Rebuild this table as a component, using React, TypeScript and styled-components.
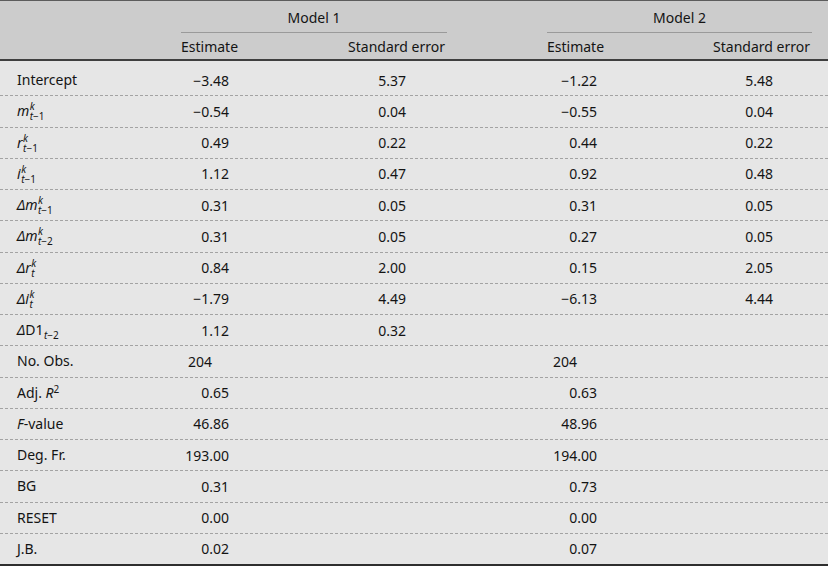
import React from "react";
import styled, { createGlobalStyle } from "styled-components";

const Global = createGlobalStyle`
  html, body { margin: 0; padding: 0; background: #e6e6e6; }
  body { font-family: "Noto Sans", "Open Sans", sans-serif; color: #141414; }
`;

const COLS = "181px 133px 133px 100px 133px 132px 1fr";

const Table = styled.div`
  width: 828px;
  height: 566px;
  display: flex;
  flex-direction: column;
  box-sizing: border-box;
  border-top: 1px solid #5c5c5c;
  border-bottom: 2px solid #2e2e2e;
  background: #e6e6e6;
  font-size: 14px;
`;

const Head = styled.div`
  background: #cccccc;
  border-bottom: 2px solid #3f3f3f;
  display: grid;
  grid-template-columns: ${COLS};
  grid-template-rows: 32px 26px;
`;

const ModelTitle = styled.div<{ $col: number }>`
  grid-column: ${(p) => p.$col} / span 2;
  grid-row: 1;
  border-bottom: 1px solid #9a9a9a;
  display: flex;
  align-items: center;
  justify-content: center;
  padding-top: 2px;
  box-sizing: border-box;
`;

const SubTitle = styled.div<{ $col: number; $right?: boolean }>`
  grid-column: ${(p) => p.$col};
  grid-row: 2;
  display: flex;
  align-items: center;
  justify-content: ${(p) => (p.$right ? "flex-end" : "flex-start")};
  padding-right: ${(p) => (p.$right ? "2px" : "0")};
`;

const Body = styled.div`
  flex: 1;
  display: flex;
  flex-direction: column;
  padding-top: 4px;
`;

const Row = styled.div<{ $last?: boolean }>`
  flex: 1;
  display: grid;
  grid-template-columns: ${COLS};
  align-items: center;
  border-bottom: ${(p) => (p.$last ? "none" : "1px dashed #a3a3a3")};
`;

const Label = styled.div`
  grid-column: 1;
  padding-left: 17px;
  white-space: nowrap;
  line-height: 20px;
`;

const Num = styled.div<{ $col: number; $pad: number; $left?: boolean }>`
  grid-column: ${(p) => p.$col};
  text-align: ${(p) => (p.$left ? "left" : "right")};
  padding-right: ${(p) => (p.$left ? 0 : p.$pad)}px;
  padding-left: ${(p) => (p.$left ? p.$pad : 0)}px;
  white-space: nowrap;
`;

const Scripts = styled.span`
  display: inline-flex;
  flex-direction: column;
  font-size: 10px;
  line-height: 10px;
  vertical-align: 6px;
  margin-left: 0.5px;
`;

const SupOnly = styled.sup`
  font-size: 10px;
  vertical-align: 5px;
  line-height: 0;
`;

const SubOnly = styled.sub`
  font-size: 10px;
  vertical-align: -4px;
  line-height: 0;
  margin-left: 0.5px;
`;

const It = styled.i`
  font-style: italic;
`;

const Var = ({ v, sup, sub }: { v: string; sup: React.ReactNode; sub: React.ReactNode }) => (
  <>
    <It>{v}</It>
    <Scripts>
      <It>{sup}</It>
      <span>{sub}</span>
    </Scripts>
  </>
);

const tm1 = (
  <>
    <It>t</It>−1
  </>
);
const tm2 = (
  <>
    <It>t</It>−2
  </>
);
const t = <It>t</It>;

type Cell = string | { v: string; left: true } | null;

const rows: { label: React.ReactNode; cells: Cell[] }[] = [
  { label: "Intercept", cells: ["−3.48", "5.37", "−1.22", "5.48"] },
  { label: <Var v="m" sup="k" sub={tm1} />, cells: ["−0.54", "0.04", "−0.55", "0.04"] },
  { label: <Var v="r" sup="k" sub={tm1} />, cells: ["0.49", "0.22", "0.44", "0.22"] },
  { label: <Var v="i" sup="k" sub={tm1} />, cells: ["1.12", "0.47", "0.92", "0.48"] },
  {
    label: (
      <>
        <It>Δ</It>
        <Var v="m" sup="k" sub={tm1} />
      </>
    ),
    cells: ["0.31", "0.05", "0.31", "0.05"],
  },
  {
    label: (
      <>
        <It>Δ</It>
        <Var v="m" sup="k" sub={tm2} />
      </>
    ),
    cells: ["0.31", "0.05", "0.27", "0.05"],
  },
  {
    label: (
      <>
        <It>Δ</It>
        <Var v="r" sup="k" sub={t} />
      </>
    ),
    cells: ["0.84", "2.00", "0.15", "2.05"],
  },
  {
    label: (
      <>
        <It>Δ</It>
        <Var v="i" sup="k" sub={t} />
      </>
    ),
    cells: ["−1.79", "4.49", "−6.13", "4.44"],
  },
  {
    label: (
      <>
        <It>Δ</It>D1<SubOnly>{tm2}</SubOnly>
      </>
    ),
    cells: ["1.12", "0.32", null, null],
  },
  { label: "No. Obs.", cells: [{ v: "204", left: true }, null, { v: "204", left: true }, null] },
  {
    label: (
      <>
        Adj. <It>R</It>
        <SupOnly>2</SupOnly>
      </>
    ),
    cells: ["0.65", null, "0.63", null],
  },
  {
    label: (
      <>
        <It>F</It>-value
      </>
    ),
    cells: ["46.86", null, "48.96", null],
  },
  { label: "Deg. Fr.", cells: ["193.00", null, "194.00", null] },
  { label: "BG", cells: ["0.31", null, "0.73", null] },
  { label: "RESET", cells: ["0.00", null, "0.00", null] },
  { label: "J.B.", cells: ["0.02", null, "0.07", null] },
];

const colSpec = [
  { col: 2, pad: 85, leftPad: 7 },
  { col: 3, pad: 41, leftPad: 7 },
  { col: 5, pad: 83, leftPad: 6 },
  { col: 6, pad: 39, leftPad: 6 },
];

export default function App() {
  return (
    <>
      <Global />
      <Table>
        <Head>
          <ModelTitle $col={2}>Model 1</ModelTitle>
          <ModelTitle $col={5}>Model 2</ModelTitle>
          <SubTitle $col={2}>Estimate</SubTitle>
          <SubTitle $col={3} $right>
            Standard error
          </SubTitle>
          <SubTitle $col={5}>Estimate</SubTitle>
          <SubTitle $col={6} $right>
            Standard error
          </SubTitle>
        </Head>
        <Body>
          {rows.map((r, i) => (
            <Row key={i} $last={i === rows.length - 1}>
              <Label>{r.label}</Label>
              {r.cells.map((c, j) => {
                if (c === null) return null;
                const s = colSpec[j];
                if (typeof c === "string")
                  return (
                    <Num key={j} $col={s.col} $pad={s.pad}>
                      {c}
                    </Num>
                  );
                return (
                  <Num key={j} $col={s.col} $pad={s.leftPad} $left>
                    {c.v}
                  </Num>
                );
              })}
            </Row>
          ))}
        </Body>
      </Table>
    </>
  );
}
